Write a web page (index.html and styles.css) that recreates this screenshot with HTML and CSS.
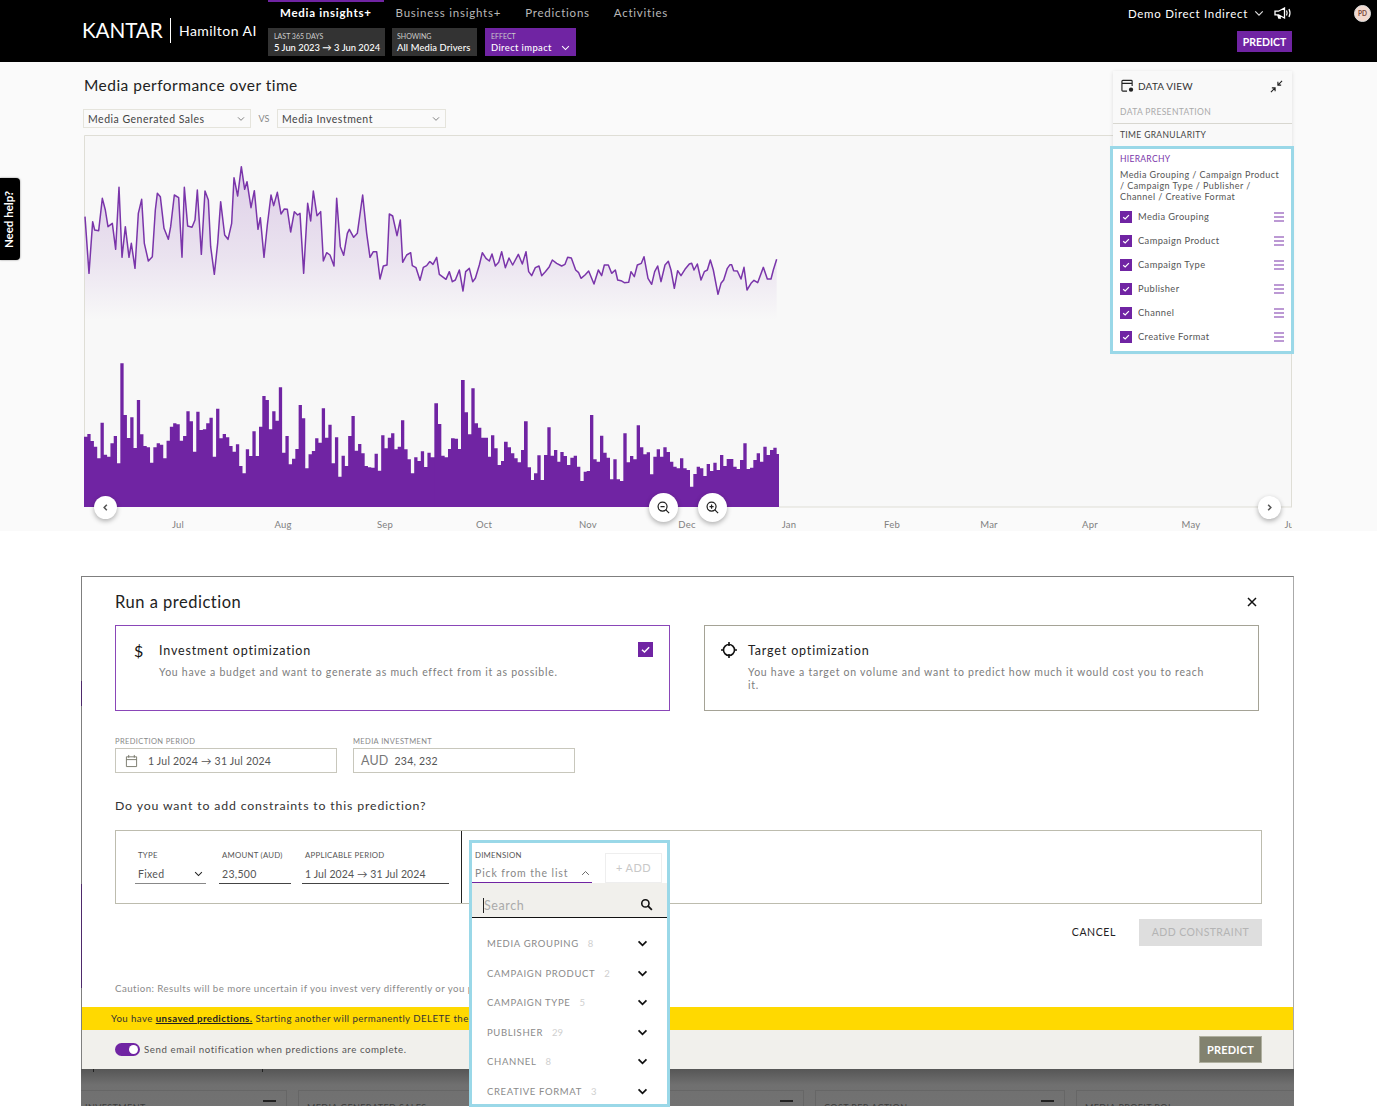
FILE: index.html
```html
<!DOCTYPE html>
<html lang="en">
<head>
<meta charset="utf-8">
<title>Media performance over time</title>
<link rel="stylesheet" href="styles.css">
</head>
<body>
<svg class="defs" width="0" height="0" aria-hidden="true">
  <symbol id="chev" viewBox="0 0 12 8"><path d="M1.500 1.500 6 6l4.500-4.500" fill="none" stroke="currentColor" stroke-width="1.400"/></symbol>
  <symbol id="chevb" viewBox="0 0 12 8"><path d="M1.500 1.500 6 6l4.500-4.500" fill="none" stroke="currentColor" stroke-width="2"/></symbol>
  <symbol id="chk" viewBox="0 0 12 12"><rect width="12" height="12" fill="#7024a3"/><path d="M3.200 6.200 5.200 8 8.900 4.200" fill="none" stroke="#fff" stroke-width="1.200"/></symbol>
  <symbol id="ham" viewBox="0 0 10 10"><path d="M0 1h10M0 5h10M0 9h10" stroke="#7a35aa" stroke-width="1.100"/></symbol>
</svg>

<header class="topbar">
  <div class="logo"><span class="kantar">KANTAR</span><span class="logo-name">Hamilton AI</span></div>
  <div class="nav-col">
    <nav class="nav">
      <a class="nav-item active">Media insights+</a>
      <a class="nav-item">Business insights+</a>
      <a class="nav-item">Predictions</a>
      <a class="nav-item">Activities</a>
    </nav>
    <div class="chips">
      <div class="chip"><span class="chip-k">LAST 365 DAYS</span><span class="chip-v">5 Jun 2023 → 3 Jun 2024</span></div>
      <div class="chip"><span class="chip-k">SHOWING</span><span class="chip-v">All Media Drivers</span></div>
      <div class="chip chip-on"><span class="chip-k">EFFECT</span><span class="chip-v">Direct impact<svg class="chip-chev"><use href="#chev"/></svg></span></div>
    </div>
  </div>
  <div class="right-col">
    <div class="account">
      <span>Demo Direct Indirect</span>
      <svg class="acc-chev"><use href="#chev"/></svg>
      <svg class="mega" viewBox="0 0 18 12"><path d="M1 4.200h3.500L10.500 1v10L4.500 7.800H1zM3.800 8l1 3h1.500l-.8-2.500" fill="none" stroke="#fff" stroke-width="1.300"/><path d="M12.500 3.500q1.300 2.500 0 5M15 2q2 4 0 8" fill="none" stroke="#fff" stroke-width="1.200"/></svg>
    </div>
    <button class="predict-top">PREDICT</button>
  </div>
  <div class="avatar">PD</div>
</header>

<main class="insights">
  <h1 class="page-title">Media performance over time</h1>
  <div class="selects">
    <div class="select"><span>Media Generated Sales</span><svg><use href="#chev"/></svg></div>
    <span class="vs">VS</span>
    <div class="select"><span>Media Investment</span><svg><use href="#chev"/></svg></div>
  </div>
  <div class="chart">
    <svg class="chart-svg" width="1208" height="396" viewBox="0 0 1208 396">
      <defs>
        <linearGradient id="areaG" gradientUnits="userSpaceOnUse" x1="0" y1="100" x2="0" y2="570">
          <stop offset="0" stop-color="#7024a3" stop-opacity=".2"/>
          <stop offset=".6" stop-color="#7024a3" stop-opacity=".1"/>
          <stop offset="1" stop-color="#7024a3" stop-opacity="0"/>
        </linearGradient>
      </defs>
      <rect width="1208" height="372" fill="#f8f8f8"/>
      <path d="M.5 372V.5H1207.500V372M695 372H1208" fill="none" stroke="#dfded6"/>
      <g transform="translate(-4 -5) scale(.33333)">
        <path fill="url(#areaG)" d="M15 570L15 260 27 430 38 275 44 300 56 302 67 205 76 240 84 290 97 280 107 358 117 172 126 382 136 290 147 382 154 340 165 415 175 250 185 208 193 340 205 393 217 380 226 240 232 190 241 200 252 295 265 328 272 290 283 195 296 203 306 382 313 172 323 288 336 292 345 270 352 180 364 373 375 183 385 210 392 350 403 433 413 340 422 215 434 315 444 328 455 280 462 143 473 198 484 110 494 178 501 155 513 233 523 182 534 298 541 263 552 382 562 285 573 195 581 227 592 187 603 252 613 237 622 238 632 306 643 245 653 255 660 250 671 430 683 220 692 273 700 183 711 257 722 245 730 393 740 368 750 375 762 408 770 205 781 350 791 376 802 310 808 298 821 322 832 310 848 195 860 310 870 382 880 365 890 365 900 447 910 408 921 405 928 252 938 258 951 317 961 270 968 397 980 375 992 368 997 407 1008 413 1020 451 1030 412 1040 407 1050 394L1050 570Z"/>
        <path fill="none" stroke="#7a35aa" stroke-width="4.500" stroke-linejoin="round" d="M15 260L27 430 38 275 44 300 56 302 67 205 76 240 84 290 97 280 107 358 117 172 126 382 136 290 147 382 154 340 165 415 175 250 185 208 193 340 205 393 217 380 226 240 232 190 241 200 252 295 265 328 272 290 283 195 296 203 306 382 313 172 323 288 336 292 345 270 352 180 364 373 375 183 385 210 392 350 403 433 413 340 422 215 434 315 444 328 455 280 462 143 473 198 484 110 494 178 501 155 513 233 523 182 534 298 541 263 552 382 562 285 573 195 581 227 592 187 603 252 613 237 622 238 632 306 643 245 653 255 660 250 671 430 683 220 692 273 700 183 711 257 722 245 730 393 740 368 750 375 762 408 770 205 781 350 791 376 802 310 808 298 821 322 832 310 848 195 860 310 870 382 880 365 890 365 900 447 910 408 921 405 928 252 938 258 951 317 961 270 968 397 980 375 992 368 997 407 1008 413 1020 451 1030 412 1040 407 1050 394"/>
      </g>
      <g transform="translate(346 -5) scale(.33333)">
        <path fill="url(#areaG)" d="M0 570L0 395 9 403 20 382 28 433 48 448 58 425 67 455 76 450 88 420 99 483 107 425 118 415 128 455 136 445 148 405 157 368 168 385 178 393 186 372 196 408 206 397 215 365 226 413 237 384 248 405 265 373 277 402 288 365 296 425 305 437 316 413 327 408 335 437 346 425 358 410 367 390 380 400 395 408 405 403 413 382 424 384 437 420 446 428 453 445 465 435 476 423 492 462 505 420 515 437 523 405 535 405 545 430 556 420 563 450 573 452 583 458 596 457 603 425 613 440 622 405 634 400 642 380 654 445 665 463 674 425 683 408 693 455 705 405 715 394 723 420 733 475 743 422 753 437 765 418 778 402 785 400 792 420 802 402 813 450 823 425 832 420 841 390 850 420 864 493 873 460 881 450 892 415 900 404 905 404 911 422 922 423 933 447 942 412 951 480 963 460 972 451 983 458 1000 412 1012 447 1023 447 1030 420 1040 388L1040 570Z"/>
        <path fill="none" stroke="#7a35aa" stroke-width="4.500" stroke-linejoin="round" d="M0 395L9 403 20 382 28 433 48 448 58 425 67 455 76 450 88 420 99 483 107 425 118 415 128 455 136 445 148 405 157 368 168 385 178 393 186 372 196 408 206 397 215 365 226 413 237 384 248 405 265 373 277 402 288 365 296 425 305 437 316 413 327 408 335 437 346 425 358 410 367 390 380 400 395 408 405 403 413 382 424 384 437 420 446 428 453 445 465 435 476 423 492 462 505 420 515 437 523 405 535 405 545 430 556 420 563 450 573 452 583 458 596 457 603 425 613 440 622 405 634 400 642 380 654 445 665 463 674 425 683 408 693 455 705 405 715 394 723 420 733 475 743 422 753 437 765 418 778 402 785 400 792 420 802 402 813 450 823 425 832 420 841 390 850 420 864 493 873 460 881 450 892 415 900 404 905 404 911 422 922 423 933 447 942 412 951 480 963 460 972 451 983 458 1000 412 1012 447 1023 447 1030 420 1040 388"/>
      </g>
      <g fill="#7024a3">
        <path transform="translate(-3.960 215) scale(.3302 .33333)" d="M12 471V260H22V252H32V273H42V290H52V325H62V218H72V314H82V320H92V280H102V258H112V340H122V40H132V195H142V264H152V202H162V294H172V150H182V253H192V288H202V292H212V338H222V292H232V280H242V284H252V325H262V272H272V230H282V220H292V223H302V272H312V258H322V184H332V214H342V305H352V185H362V240H372V238H382V220H392V203H402V320H412V176H422V265H432V252H442V262H452V288H462V305H472V283H482V348H492V370H502V298H512V318H522V244H532V318H542V230H552V138H562V150H572V238H582V184H592V212H602V112H612V308H622V258H632V343H642V326H652V297H662V165H672V205H682V355H692V313H702V303H712V265H722V278H732V175H742V263H752V224H762V340H772V262H782V380H792V317H802V348H812V258H822V198H832V302H842V282H852V310H862V348H872V352H882V353H892V311H902V362H912V256H922V295H932V263H942V250H952V298H962V290H972V211H982V298H992V328H1002V370H1012V322H1022V333H1032V304H1042V351H1052V308H1062V322H1075V471Z"/>
        <path transform="translate(346 215) scale(.33333)" d="M13 471V160H24V222H34V317H44V322H54V297H63V265H74V266H84V297H93V90H104V187H114V253H124V115H134V220H144V233H154V263H164V263H174V320H183V256H193V295H203V345H213V333H222V275H233V292H243V310H253V325H263V337H273V300H282V214H293V352H303V390H312V370H322V316H332V390H342V315H352V232H362V317H372V300H382V335H391V306H401V318H411V345H421V323H431V317H441V350H451V393H461V365H470V363H480V195H490V328H500V335H510V257H520V308H530V323H540V388H550V328H560V388H570V393H580V250H590V337H600V318H610V328H620V226H630V292H640V313H650V307H660V373H670V320H680V298H690V320H700V292H710V306H720V335H730V350H740V355H750V325H760V355H770V360H780V410H790V372H800V350H810V355H820V378H830V342H840V363H850V338H860V360H870V315H880V348H890V327H900V327H910V350H920V357H930V330H940V280H950V357H960V353H970V330H980V310H990V335H1000V290H1010V315H1020V300H1030V293H1040V312H1047V471Z"/>
      </g>
      <g class="axis" text-anchor="middle">
        <text x="94" y="393">Jul</text><text x="199" y="393">Aug</text><text x="301" y="393">Sep</text><text x="400" y="393">Oct</text><text x="504" y="393">Nov</text><text x="603" y="393">Dec</text><text x="705" y="393">Jan</text><text x="808" y="393">Feb</text><text x="905" y="393">Mar</text><text x="1006" y="393">Apr</text><text x="1107" y="393">May</text><text x="1208" y="393">Jun</text>
      </g>
    </svg>
    <button class="round r-prev"><svg viewBox="0 0 10 10"><path d="M6.200 2.500 3.800 5l2.400 2.500" fill="none" stroke="#555" stroke-width="1.400"/></svg></button>
    <button class="round big r-out"><svg viewBox="0 0 16 16"><circle cx="7" cy="7" r="4.800" fill="none" stroke="#222" stroke-width="1.300"/><path d="m10.500 10.500 3.500 3.500M4.800 7h4.400" stroke="#222" stroke-width="1.300"/></svg></button>
    <button class="round big r-in"><svg viewBox="0 0 16 16"><circle cx="7" cy="7" r="4.800" fill="none" stroke="#222" stroke-width="1.300"/><path d="m10.500 10.500 3.500 3.500M4.800 7h4.400M7 4.800v4.400" stroke="#222" stroke-width="1.300"/></svg></button>
    <button class="round r-next"><svg viewBox="0 0 10 10"><path d="M3.800 2.500 6.200 5 3.800 7.500" fill="none" stroke="#555" stroke-width="1.400"/></svg></button>
  </div>

  <aside class="data-view">
    <div class="dv-head">
      <svg class="dv-ic" viewBox="0 0 14 14"><path d="M6.500 12.500H2a1 1 0 0 1-1-1V2a1 1 0 0 1 1-1h9a1 1 0 0 1 1 1v5M1 4.200h11" fill="none" stroke="#222" stroke-width="1.200"/><circle cx="10.800" cy="11" r="2.300" fill="#222"/></svg>
      <span class="dv-title">DATA VIEW</span>
      <svg class="dv-min" viewBox="0 0 14 14"><path d="M13 1 8.500 5.500M8.500 2v3.500H12M1 13l4.500-4.500M5.500 12V8.500H2" fill="none" stroke="#222" stroke-width="1.200"/></svg>
    </div>
    <div class="dv-sec dv-muted">DATA PRESENTATION</div>
    <div class="dv-sec dv-time">TIME GRANULARITY</div>
    <section class="hierarchy">
      <h2 class="h-title">HIERARCHY</h2>
      <p class="h-path">Media Grouping / Campaign Product / Campaign Type / Publisher / Channel / Creative Format</p>
      <ul class="h-list">
        <li><svg class="cb"><use href="#chk"/></svg><span>Media Grouping</span><svg class="ham"><use href="#ham"/></svg></li>
        <li><svg class="cb"><use href="#chk"/></svg><span>Campaign Product</span><svg class="ham"><use href="#ham"/></svg></li>
        <li><svg class="cb"><use href="#chk"/></svg><span>Campaign Type</span><svg class="ham"><use href="#ham"/></svg></li>
        <li><svg class="cb"><use href="#chk"/></svg><span>Publisher</span><svg class="ham"><use href="#ham"/></svg></li>
        <li><svg class="cb"><use href="#chk"/></svg><span>Channel</span><svg class="ham"><use href="#ham"/></svg></li>
        <li><svg class="cb"><use href="#chk"/></svg><span>Creative Format</span><svg class="ham"><use href="#ham"/></svg></li>
      </ul>
    </section>
  </aside>
  <div class="need-help"><span>Need help?</span></div>
</main>

<section class="modal-wrap">
  <div class="dialog">
    <div class="dialog-body">
      <div class="dialog-head">
        <h2 class="dialog-title">Run a prediction</h2>
        <svg class="close" viewBox="0 0 10 10"><path d="m1 1 8 8M9 1 1 9" stroke="#111" stroke-width="1.500"/></svg>
      </div>
      <div class="cards">
        <div class="card card-on">
          <div class="card-ic dollar">$</div>
          <div class="card-text"><h3>Investment optimization</h3><p>You have a budget and want to generate as much effect from it as possible.</p></div>
          <svg class="card-check"><use href="#chk"/></svg>
        </div>
        <div class="card">
          <div class="card-ic"><svg viewBox="0 0 16 16"><circle cx="8" cy="8" r="5.500" fill="none" stroke="#111" stroke-width="1.600"/><path d="M8 0v4M8 12v4M0 8h3M13 8h3" stroke="#111" stroke-width="1.600"/></svg></div>
          <div class="card-text"><h3>Target optimization</h3><p>You have a target on volume and want to predict how much it would cost you to reach it.</p></div>
        </div>
      </div>
      <div class="fields">
        <div class="field">
          <label class="f-label">PREDICTION PERIOD</label>
          <div class="f-input"><svg class="cal" viewBox="0 0 14 14"><path d="M1.500 2.500h11v10.500h-11zM1.500 5.500h11M4 .5v3M10 .5v3" fill="none" stroke="#77776a"/></svg><span>1 Jul 2024 → 31 Jul 2024</span></div>
        </div>
        <div class="field">
          <label class="f-label">MEDIA INVESTMENT</label>
          <div class="f-input"><span class="aud">AUD</span><span>234, 232</span></div>
        </div>
      </div>
      <h3 class="question">Do you want to add constraints to this prediction?</h3>
      <div class="constraint">
        <div class="c-col c-type"><span class="c-k">TYPE</span><span class="c-v">Fixed<svg><use href="#chev"/></svg></span></div>
        <div class="c-col c-amt"><span class="c-k">AMOUNT (AUD)</span><span class="c-v">23,500</span></div>
        <div class="c-col c-per"><span class="c-k">APPLICABLE PERIOD</span><span class="c-v">1 Jul 2024 → 31 Jul 2024</span></div>
        <div class="c-rule"></div>
        <div class="dropdown">
          <div class="dd-top">
            <div class="dd-dim"><span class="c-k">DIMENSION</span><span class="dd-pick">Pick from the list<svg viewBox="0 0 12 8"><path d="M1.500 6.500 6 2l4.500 4.500" fill="none" stroke="#666" stroke-width="1.300"/></svg></span></div>
            <div class="dd-add">+ ADD</div>
          </div>
          <div class="dd-search"><span class="dd-ph">Search</span><svg viewBox="0 0 14 14"><circle cx="5.800" cy="5.800" r="3.900" fill="none" stroke="#111" stroke-width="1.700"/><path d="m8.800 8.800 4 4" stroke="#111" stroke-width="1.900"/></svg></div>
          <ul class="dd-list">
            <li><span>MEDIA GROUPING</span><em>8</em><svg><use href="#chevb"/></svg></li>
            <li><span>CAMPAIGN PRODUCT</span><em>2</em><svg><use href="#chevb"/></svg></li>
            <li><span>CAMPAIGN TYPE</span><em>5</em><svg><use href="#chevb"/></svg></li>
            <li><span>PUBLISHER</span><em>29</em><svg><use href="#chevb"/></svg></li>
            <li><span>CHANNEL</span><em>8</em><svg><use href="#chevb"/></svg></li>
            <li><span>CREATIVE FORMAT</span><em>3</em><svg><use href="#chevb"/></svg></li>
          </ul>
        </div>
      </div>
      <div class="actions">
        <span class="cancel">CANCEL</span>
        <button class="add-c">ADD CONSTRAINT</button>
      </div>
      <p class="caution">Caution: Results will be more uncertain if you invest very differently or you predict</p>
    </div>
    <div class="warn">You have <a>unsaved predictions.</a> Starting another will permanently DELETE them.</div>
    <div class="foot">
      <span class="toggle"></span>
      <span class="foot-text">Send email notification when predictions are complete.</span>
      <button class="predict-foot">PREDICT</button>
    </div>
  </div>
  <div class="behind">
    <div class="b-card b1"><span>INVESTMENT</span><i></i></div>
    <div class="b-card b2"><span>MEDIA GENERATED SALES</span><i></i></div>
    <div class="b-card b3"><span>MEDIA NET PROFIT</span><i></i></div>
    <div class="b-card b4"><span>COST PER ACTION</span><i></i></div>
    <div class="b-card b5"><span>MEDIA PROFIT ROI</span></div>
  </div>
</section>
</body>
</html>
```

FILE: styles.css
```css
* { box-sizing: border-box; }
html, body { margin: 0; padding: 0; }
body { width: 1377px; height: 1108px; overflow: hidden; position: relative; background: #fff; font-family: "Lato", "Open Sans", sans-serif; color: #333; }
h1, h2, h3, p, ul { margin: 0; padding: 0; font-weight: 400; }
ul { list-style: none; }
button { font-family: inherit; border: 0; padding: 0; }
.defs { position: absolute; }

/* header */
.topbar { height: 62px; background: #000; color: #fff; display: flex; padding: 0 6px 0 83px; }
.logo { width: 185px; display: flex; align-items: center; height: 60px; flex: none; }
.kantar { font-size: 20.700px; line-height: 25px; letter-spacing: -.1px; text-indent: -1px; padding-right: 8px; border-right: 1px solid #fff; margin-right: 8px; width: 88px; white-space: nowrap; }
.logo-name { font-size: 14px; letter-spacing: .45px; white-space: nowrap; }
.nav-col { width: 420px; }
.nav { display: flex; height: 28px; }
.nav-item { padding: 0 12px; font-size: 11.500px; line-height: 22px; letter-spacing: .76px; color: #b8b8b8; border-top: 2px solid transparent; white-space: nowrap; }
.nav-item.active { color: #fff; font-weight: 700; border-top-color: #7024a3; letter-spacing: .72px; }
.chips { display: flex; gap: 8px; height: 28px; }
.chip { background: #333; padding: 4px 6px 0; display: flex; flex-direction: column; white-space: nowrap; }
.chip:first-child { width: 117px; }
.chip:nth-child(2) { width: 85px; margin-left: -1px; padding-left: 5px; }
.chip:nth-child(2) .chip-v { letter-spacing: .12px; }
.chip-on { background: #7024a3; width: 91px; }
.chip-on .chip-v { letter-spacing: .4px; }
.chip-k { font-size: 7px; line-height: 9px; color: #ccc; }
.chip-v { font-size: 9.400px; line-height: 13px; font-weight: 500; display: flex; align-items: center; }
.chip-chev { width: 9px; height: 6px; margin-left: 9px; color: #fff; }
.right-col { margin-left: auto; display: flex; flex-direction: column; align-items: flex-end; }
.account { display: flex; align-items: center; height: 26px; font-size: 11.500px; letter-spacing: .7px; white-space: nowrap; }
.acc-chev { width: 10px; height: 7px; margin-left: 6px; color: #ddd; }
.mega { width: 18px; height: 12px; margin-left: 10px; }
.predict-top { margin-top: 5px; width: 55px; height: 21px; background: #7024a3; color: #fff; font-size: 10.500px; font-weight: 700; }
.avatar { width: 17px; height: 17px; margin: 5px 0 0 62px; border-radius: 50%; background: #f2d9cf; border: 1px solid #ddd; color: #7a4a40; font-size: 6.500px; line-height: 15px; text-align: center; flex: none; font-weight: 700; }

/* insights */
.insights { height: 469px; background: #fafafa; position: relative; overflow: hidden; padding-left: 84px; }
.page-title { font-size: 15.500px; line-height: 20px; padding-top: 14px; height: 47px; letter-spacing: .47px; color: #222; margin-top: -1px; margin-bottom: 1px; }
.selects { display: flex; align-items: center; margin-left: -1px; height: 19px; }
.select { width: 169px; height: 19px; border: 1px solid #e5e4dc; display: flex; align-items: center; justify-content: space-between; padding: 0 4px; font-size: 10.500px; letter-spacing: .5px; color: #444; }
.select:first-child { width: 168px; }
.select svg { width: 8px; height: 6px; color: #777; margin-right: 1px; }
.vs { width: 26px; text-align: center; font-size: 9px; color: #888; }
.chart { position: relative; width: 1208px; margin-top: 7px; }
.chart-svg { display: block; }
.axis text { font-family: "Lato", sans-serif; font-size: 9.500px; fill: #808080; letter-spacing: .2px; }
.round { position: absolute; width: 23px; height: 23px; top: 361px; border-radius: 50%; background: #fff; box-shadow: 0 2px 5px rgba(0,0,0,.3); display: flex; align-items: center; justify-content: center; }
.round svg { width: 11px; height: 11px; }
.round.big { width: 29px; height: 29px; top: 358px; }
.round.big svg { width: 15px; height: 15px; }
.r-prev { left: 10px; }
.r-next { left: 1174px; }
.r-out { left: 565px; }
.r-in { left: 614px; }

.data-view { position: absolute; left: 1113px; top: 9px; width: 179px; height: 280px; background: #f9f9f9; box-shadow: 0 1px 4px rgba(0,0,0,.12); }
.dv-head { height: 30px; display: flex; align-items: center; padding: 0 9px 0 8px; }
.dv-ic { width: 13px; height: 14px; }
.dv-title { margin-left: 4px; font-size: 10px; letter-spacing: .2px; color: #333; }
.dv-min { width: 13px; height: 13px; margin-left: auto; margin-top: 1px; }
.dv-sec { font-size: 8.500px; letter-spacing: .35px; padding-left: 7px; }
.dv-muted { color: #aaa; height: 23px; line-height: 22px; border-bottom: 1px solid #d8d7d0; }
.dv-time { color: #444; height: 22px; line-height: 22px; }
.hierarchy { width: 184px; margin-left: -3px; height: 208px; background: #fff; border: 3.500px solid #9ad8e8; padding: 3.500px 3px 0 7px; }
.h-title { font-size: 8.500px; line-height: 12px; color: #7a35aa; letter-spacing: .3px; }
.h-path { font-size: 9px; line-height: 10.800px; color: #555; margin-top: 5.500px; width: 165px; letter-spacing: .43px; }
.h-list { margin-top: 2.500px; padding-right: 4px; }
.h-list li { height: 24px; display: flex; align-items: center; font-size: 9.300px; letter-spacing: .4px; color: #555; }
.cb { width: 12px; height: 12px; margin-right: 6px; }
.ham { width: 10px; height: 10px; margin-left: auto; }
.need-help { position: absolute; left: 0; top: 116px; width: 20px; height: 82px; background: #000; border-radius: 0 4px 4px 0; box-shadow: 0 0 2px #777; color: #fff; display: flex; align-items: center; justify-content: center; padding-right: 3px; }
.need-help span { transform: rotate(-90deg); font-size: 11.500px; font-weight: 700; white-space: nowrap; }

/* modal */
.modal-wrap { margin: 45px 0 0 81px; width: 1213px; }
.dialog { height: 493px; background: #fff; border: 1px solid #7f7f7f; border-bottom: 0; border-right-color: #aaa; position: relative; }
.dialog::before { content: ""; position: absolute; left: -1px; top: 307px; width: 1px; height: 104px; background: #4e2a6b; }
.dialog::after { content: ""; position: absolute; left: -1px; top: 104px; width: 1px; height: 25px; background: #4e2a6b; }
.dialog-body { height: 430px; padding: 0 31px 0 33px; }
.dialog-head { height: 48px; display: flex; justify-content: space-between; align-items: center; padding: 1px 5px 0 0; }
.dialog-title { font-size: 16.500px; letter-spacing: .5px; color: #222; }
.close { width: 10px; height: 10px; }
.cards { display: flex; gap: 34px; }
.card { width: 555px; height: 86px; border: 1px solid #a5a396; display: flex; padding: 16px 0 0 16px; position: relative; }
.card-on { border-color: #8a46b8; }
.card-ic { width: 27px; font-size: 16px; line-height: 18px; color: #111; flex: none; }
.card-ic svg { width: 16px; height: 16px; display: block; }
.dollar { padding-left: 2px; }
.card-text { width: 463px; }
.card-text h3 { font-size: 12.500px; line-height: 18px; letter-spacing: .85px; color: #222; }
.card-text p { font-size: 10.500px; line-height: 13px; letter-spacing: .74px; color: #7d7d7d; margin-top: 6px; }
.card-check { position: absolute; left: 522px; top: 16px; width: 15px; height: 15px; }
.fields { display: flex; gap: 16px; margin-top: 24px; }
.field { width: 222px; }
.f-label { display: block; height: 13px; font-size: 7.500px; line-height: 14px; color: #888; letter-spacing: .38px; }
.f-input { height: 25px; border: 1px solid #c8c7bc; display: flex; align-items: center; padding-left: 9px; font-size: 10.500px; letter-spacing: .2px; color: #555; }
.cal { width: 13px; height: 14px; margin-right: 10px; }
.aud { font-size: 12.500px; color: #777; margin-right: 6px; }
.field + .field .f-input { padding-left: 7px; }
.question { margin-top: 24px; height: 18px; font-size: 12.300px; line-height: 18px; letter-spacing: .85px; color: #333; }
.constraint { margin-top: 15px; position: relative; width: 1147px; height: 74px; border: 1px solid #bdbcae; display: flex; padding: 18px 0 0 22px; }
.c-col { display: flex; flex-direction: column; }
.c-k { font-size: 7.800px; line-height: 12px; color: #555; letter-spacing: .25px; white-space: nowrap; }
.c-v { display: flex; align-items: center; justify-content: space-between; height: 20px; margin-top: 3px; border-bottom: 1px solid #444; font-size: 10.500px; letter-spacing: .3px; color: #555; white-space: nowrap; margin-left: -3px; padding-left: 3px; }
.c-v svg { width: 9px; height: 6px; margin-right: 3px; color: #222; }
.c-type { width: 84px; }
.c-type .c-v { width: 71px; border-bottom-color: #888; }
.c-amt { width: 83px; }
.c-amt .c-v { width: 72px; }
.c-per .c-v { width: 147px; letter-spacing: .1px; }
.c-rule { position: absolute; left: 345px; top: 0; width: 1px; height: 72px; background: #222; }
.dropdown { position: absolute; left: 353px; top: 9px; width: 201px; height: 267px; background: #fff; border: 3.500px solid #9ad8e8; z-index: 3; }
.dd-top { height: 40px; display: flex; padding-left: 3px; }
.dd-dim { width: 120px; margin-left: -3px; padding: 5.500px 0 0 3px; border-bottom: 1.500px solid #7024a3; height: 40px; display: flex; flex-direction: column; }
.dd-pick { display: flex; align-items: center; justify-content: space-between; font-size: 10.500px; letter-spacing: .88px; color: #888; line-height: 16px; margin-top: 4px; padding-right: 2px; white-space: nowrap; }
.dd-pick svg { width: 9px; height: 6px; }
.dd-add { width: 57px; height: 30px; margin: 10px 0 0 13px; border: 1px solid #eee; color: #c8c8c8; font-size: 11px; letter-spacing: .4px; line-height: 28px; text-align: center; }
.dd-search { height: 35px; background: #f1f0ec; border-bottom: 1.500px solid #111; display: flex; align-items: center; justify-content: space-between; padding: 11px 14px 0 11px; }
.dd-ph { font-size: 12.500px; letter-spacing: .6px; color: #aaa; border-left: 1px solid #222; line-height: 15px; }
.dd-search svg { width: 13px; height: 13px; margin-top: -3px; }
.dd-list { padding-top: 11px; }
.dd-list li { height: 29.500px; display: flex; align-items: center; padding-left: 15px; font-size: 9.500px; letter-spacing: .65px; color: #8a8a8a; white-space: nowrap; }
.dd-list em { font-style: normal; color: #cfcfcf; margin-left: 9px; letter-spacing: 0; }
.dd-list svg { width: 11px; height: 7px; margin-left: auto; margin-right: 19px; color: #111; }
.actions { display: flex; justify-content: flex-end; align-items: center; margin-top: 15px; height: 27px; }
.cancel { font-size: 10.500px; letter-spacing: .6px; color: #222; margin: -2px 23px 0 0; }
.add-c { width: 123px; height: 27px; background: #dedede; color: #b4b4b4; font-size: 10.500px; letter-spacing: .4px; padding-bottom: 2px; }
.caution { margin-top: 35px; font-size: 9.700px; line-height: 14px; letter-spacing: .45px; color: #8a8a8a; white-space: nowrap; }
.warn { height: 23px; background: #ffd900; padding-left: 29px; font-size: 9.700px; line-height: 22px; letter-spacing: .42px; color: #333; white-space: nowrap; overflow: hidden; }
.warn a { font-weight: 700; text-decoration: underline; color: #222; }
.foot { height: 39px; background: #f1f0ec; display: flex; align-items: center; padding: 0 31px 1px 33px; }
.toggle { width: 25px; height: 13px; border-radius: 7px; background: #7024a3; position: relative; }
.toggle::after { content: ""; position: absolute; right: 2px; top: 2px; width: 9px; height: 9px; border-radius: 50%; background: #fff; }
.foot-text { font-size: 9.700px; letter-spacing: .56px; color: #555; margin-left: 4px; }
.predict-foot { margin-left: auto; width: 63px; height: 27px; background: #82826f; color: #fff; font-size: 11px; font-weight: 700; letter-spacing: .2px; border: 1px solid #b0b0a0; }
.behind { height: 37px; background: linear-gradient(#565656, #707070 16px, #727272); position: relative; overflow: hidden; display: flex; gap: 11px; padding-top: 21px; }
.behind::before, .behind::after { content: ""; position: absolute; top: 0; width: 1px; height: 3px; background: #222; }
.behind::before { left: 12px; }
.behind::after { left: 181px; }
.b-card { flex: none; width: 248px; height: 60px; border: 1px solid #666; padding: 11px 0 0 8px; font-size: 9px; letter-spacing: .4px; color: #3d3d3d; position: relative; white-space: nowrap; }
.b-card i { position: absolute; right: 10px; top: 9px; width: 13px; height: 1.500px; background: #222; }
.b1 { width: 206px; border-left: 0; padding-left: 4px; }
.b2 { width: 248px; }
.b3 { width: 247px; }
.b4 { width: 250px; }
.b5 { width: 230px; border-right: 0; }
```
